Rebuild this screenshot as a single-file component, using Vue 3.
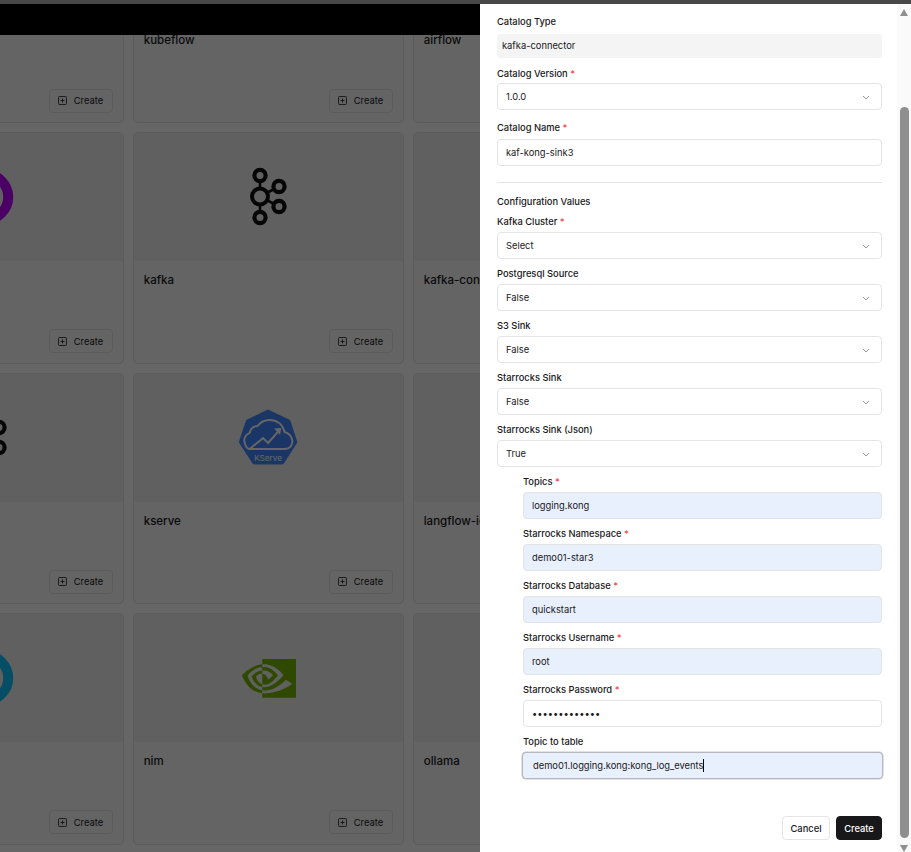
<template>
  <div class="app">
    <div class="strip"></div>
    <div class="page">
      <div class="backdrop">
        <div class="topbar"></div>
        <div class="grid">
          <div v-for="(card, i) in cards" :key="i" class="card">
            <div class="card-img">
              <svg v-if="card.logo === 'kafka'" class="logo-kafka" viewBox="0 0 40 60" fill="none" stroke="#111" stroke-width="4.2">
                <path d="M12 13V45M12 29.5L31 19.5M12 29.5L31 39.5" stroke-width="2.6" />
                <circle cx="12" cy="8.5" r="5.6" fill="#eef0ee" />
                <circle cx="12" cy="29.5" r="8" fill="#eef0ee" stroke-width="4" />
                <circle cx="12" cy="50.5" r="5.6" fill="#eef0ee" />
                <circle cx="31" cy="19.5" r="5.6" fill="#eef0ee" />
                <circle cx="31" cy="39.5" r="5.6" fill="#eef0ee" />
              </svg>
              <svg v-else-if="card.logo === 'kserve'" class="logo-kserve" viewBox="0 0 60 57">
                <path d="M29.3 0.5L50.5 10.5C51.2 10.8 51.7 11.4 51.9 12.1L58.5 32.2C58.7 32.9 58.6 33.6 58.2 34.2L45.5 54.2C45 55 44.2 55.5 43.3 55.5H16C15.1 55.5 14.3 55 13.8 54.2L0.8 34.2C0.4 33.6 0.3 32.9 0.5 32.2L7.2 12.1C7.4 11.4 7.9 10.8 8.6 10.5Z" fill="#4387ff" />
                <path d="M11 40H46C52 40 54.5 35 53.5 30.5C52.6 26.4 49.6 24 46 23C44 15 38 11 31 11C26 11 22 13 19 17C14.5 17 12 20 11 24C7 26 5 29.5 6 33.5C7 37.5 9 40 11 40L24.5 29L29.5 34L40 22" fill="none" stroke="#fff" stroke-width="1.9" />
                <path d="M35.5 19.5L42.5 19L41.5 26Z" fill="#fff" />
                <text x="29.5" y="51.5" text-anchor="middle" class="kserve-text">KServe</text>
              </svg>
              <svg v-else-if="card.logo === 'nim'" class="logo-nim" viewBox="0 4.06 24 15.94" preserveAspectRatio="none">
                <path fill="#76b900" d="M8.948 8.798v-1.43a6.7 6.7 0 0 1 .424-.018c3.922-.124 6.493 3.374 6.493 3.374s-2.774 3.851-5.75 3.851c-.398 0-.787-.062-1.158-.185v-4.346c1.528.185 1.837.857 2.747 2.385l2.04-1.714s-1.492-1.952-4-1.952a6.016 6.016 0 0 0-.796.035m0-4.735v2.138l.424-.027c5.45-.185 9.01 4.47 9.01 4.47s-4.08 4.964-8.33 4.964c-.37 0-.733-.035-1.095-.097v1.325c.3.035.61.062.91.062 3.957 0 6.82-2.023 9.593-4.408.459.371 2.34 1.263 2.73 1.652-2.633 2.208-8.772 3.984-12.253 3.984-.335 0-.653-.018-.971-.053v1.864H24V4.063zm0 10.326v1.131c-3.657-.654-4.673-4.46-4.673-4.46s1.758-1.944 4.673-2.262v1.237H8.94c-1.528-.186-2.73 1.245-2.73 1.245s.68 2.412 2.739 3.11M2.456 10.9s2.164-3.197 6.5-3.533V6.201C4.153 6.59 0 10.653 0 10.653s2.35 6.802 8.948 7.42v-1.237c-4.84-.6-6.492-5.936-6.492-5.936z" />
              </svg>
              <svg v-else-if="card.logo === 'ring'" class="logo-ring" viewBox="0 0 56 56" fill="none">
                <circle cx="25.5" cy="28" r="22.7" :stroke="card.color" stroke-width="10" />
              </svg>
            </div>
            <div class="card-name">{{ card.name }}</div>
            <!-- third column buttons are behind the drawer -->
            <div v-if="i % 3 !== 2" class="card-foot">
              <button class="create-btn">
                <svg class="plus-ico" viewBox="0 0 10 10" fill="none" stroke="#18181b" stroke-width="0.9">
                  <rect x="0.6" y="0.6" width="8.8" height="8.8" rx="1" />
                  <path d="M5 2.8V7.2M2.8 5H7.2" />
                </svg>
                Create
              </button>
            </div>
          </div>
        </div>
        <div class="overlay"></div>
      </div>

      <div class="drawer">
        <div class="form">
          <div class="field first">
            <div class="label">Catalog Type</div>
            <div class="ctl readonly">kafka-connector</div>
          </div>
          <div class="field tight">
            <div class="label">Catalog Version <span class="req">*</span></div>
            <div class="ctl select">1.0.0<svg class="chev" viewBox="0 0 8 5" fill="none"><path d="M1 1L4 4L7 1" /></svg></div>
          </div>
          <div class="field name">
            <div class="label">Catalog Name <span class="req">*</span></div>
            <div class="ctl">kaf-kong-sink3</div>
          </div>

          <div class="divider"></div>
          <div class="section">Configuration Values</div>

          <div v-for="s in selects" :key="s.label" class="field">
            <div class="label">{{ s.label }} <span v-if="s.req" class="req">*</span></div>
            <div class="ctl select">{{ s.value }}<svg class="chev" viewBox="0 0 8 5" fill="none"><path d="M1 1L4 4L7 1" /></svg></div>
          </div>

          <div class="nested">
            <div v-for="f in nested" :key="f.label" class="field">
              <div class="label">{{ f.label }} <span class="req">*</span></div>
              <div class="ctl" :class="{ filled: f.filled }">{{ f.value }}</div>
            </div>
            <div class="field">
              <div class="label">Topic to table</div>
              <div class="ctl filled focus">demo01.logging.kong:kong_log_events<span class="caret"></span></div>
            </div>
          </div>

          <div class="actions">
            <button class="btn">Cancel</button>
            <button class="btn primary">Create</button>
          </div>
        </div>

        <div class="scrollbar">
          <div class="arrow up"></div>
          <div class="thumb"></div>
          <div class="arrow down"></div>
        </div>
      </div>
    </div>
  </div>
</template>

<script setup>
// first column is only visible at its right edge, names are scrolled out of view
const cards = [
  { name: '' },
  { name: 'kubeflow' },
  { name: 'airflow' },
  { name: '', logo: 'ring', color: '#bc00ff' },
  { name: 'kafka', logo: 'kafka' },
  { name: 'kafka-connector' },
  { name: '', logo: 'kafka' },
  { name: 'kserve', logo: 'kserve' },
  { name: 'langflow-ide' },
  { name: '', logo: 'ring', color: '#10c0ff' },
  { name: 'nim', logo: 'nim' },
  { name: 'ollama' }
]

const selects = [
  { label: 'Kafka Cluster', value: 'Select', req: true },
  { label: 'Postgresql Source', value: 'False' },
  { label: 'S3 Sink', value: 'False' },
  { label: 'Starrocks Sink', value: 'False' },
  { label: 'Starrocks Sink (Json)', value: 'True' }
]

const nested = [
  { label: 'Topics', value: 'logging.kong', filled: true },
  { label: 'Starrocks Namespace', value: 'demo01-star3', filled: true },
  { label: 'Starrocks Database', value: 'quickstart', filled: true },
  { label: 'Starrocks Username', value: 'root', filled: true },
  { label: 'Starrocks Password', value: '•••••••••••••' }
]
</script>

<style>
html, body {
  margin: 0;
  overflow: hidden;
  background: #fff;
}
</style>

<style scoped>
.app {
  width: 911px;
  height: 852px;
  overflow: hidden;
  font-family: Inter, "Liberation Sans", sans-serif;
  color: #18181b;
}

.strip {
  height: 4px;
  background: #484848;
}

.page {
  display: flex;
  height: 848px;
}

.backdrop {
  position: relative;
  width: 480px;
  flex-shrink: 0;
  overflow: hidden;
}

.topbar {
  position: relative;
  z-index: 1;
  height: 31px;
  background: #000;
}

/* page is scrolled, so the first row sits under the bar */
.grid {
  display: grid;
  grid-template-columns: repeat(3, 271px);
  column-gap: 9px;
  row-gap: 9.3px;
  margin: -143px 0 0 -147.3px;
}

.card {
  height: 231.2px;
  box-sizing: border-box;
  border: 1px solid #e4e4e4;
  border-radius: 5px;
  background: #fafafa;
  display: flex;
  flex-direction: column;
  overflow: hidden;
}

.card-img {
  height: 128px;
  flex-shrink: 0;
  background: #eef0ee;
  display: flex;
  align-items: center;
  justify-content: center;
}

.logo-kafka {
  width: 40px;
  height: 60px;
}

.logo-kserve {
  width: 60px;
  height: 57px;
  transform: translateX(0.6px);
}

.logo-nim {
  width: 54.3px;
  height: 39px;
  transform: translateX(1px);
}

.logo-ring {
  width: 56px;
  height: 56px;
}

.kserve-text {
  font-family: Inter, "Liberation Sans", sans-serif;
  font-size: 8.2px;
  fill: #fff;
}

.card-name {
  height: 16px;
  padding: 11px 10px 0;
  font-size: 11.5px;
  font-weight: 500;
  line-height: 16px;
  white-space: nowrap;
}

.card-foot {
  margin-top: auto;
  padding: 0 10px 9.5px;
  display: flex;
  justify-content: flex-end;
}

.create-btn {
  width: 64px;
  height: 24px;
  padding: 0;
  border: 1px solid #e4e4e7;
  border-radius: 4px;
  background: #fafafa;
  color: #18181b;
  font-family: inherit;
  font-size: 9.33px;
  font-weight: 400;
  display: flex;
  align-items: center;
  justify-content: center;
  gap: 6.5px;
}

.plus-ico {
  width: 9px;
  height: 9px;
}

.overlay {
  position: absolute;
  inset: 0;
  z-index: 2;
  background: rgba(0, 0, 0, 0.6);
}

.drawer {
  flex: 1;
  min-width: 0;
  background: #fff;
  display: flex;
}

.form {
  flex: 1;
  box-sizing: border-box;
  padding: 9px 15px 0 17px;
  min-width: 0;
}

.field {
  margin-bottom: 6px;
}

.field.first {
  margin-bottom: 7px;
}

.field.first .label {
  margin-bottom: 5px;
}

.field.tight {
  margin-bottom: 9px;
}

.field.tight .label {
  margin-bottom: 2px;
}

.field.name .label {
  margin-bottom: 4px;
}

.label {
  height: 16px;
  margin-bottom: 3px;
  font-size: 9.33px;
  font-weight: 500;
  line-height: 18px;
  white-space: nowrap;
}

.req {
  color: #ef4444;
}

.ctl {
  position: relative;
  box-sizing: border-box;
  height: 27px;
  padding: 0 8px;
  border: 1px solid #e4e4e7;
  border-radius: 4px;
  background: #fff;
  font-size: 9.33px;
  line-height: 25px;
  white-space: nowrap;
}

.readonly {
  height: 24px;
  padding: 0 5px;
  border: 0;
  background: #f4f4f4;
  line-height: 24px;
}

.filled {
  background: #e8f0fe;
}

.focus {
  margin: 0 -1px;
  padding: 0 10px;
  border-color: #b4b7bb;
  box-shadow: 0 0 0 0.5px #c4c7cc;
}

.caret {
  display: inline-block;
  width: 1px;
  height: 13px;
  background: #000;
  vertical-align: -3px;
}

.chev {
  position: absolute;
  top: 11px;
  right: 11px;
  width: 8px;
  height: 5px;
}

.chev path {
  stroke: #8a8a8a;
  stroke-width: 0.9;
}

.divider {
  height: 1px;
  margin: 16px 0 10px;
  background: #e4e4e7;
}

.section {
  height: 16px;
  margin-bottom: 4px;
  font-size: 9.33px;
  font-weight: 500;
  line-height: 18px;
}

.nested {
  padding-left: 26px;
}

.actions {
  margin-top: 37px;
  display: flex;
  justify-content: flex-end;
  gap: 6px;
}

.btn {
  height: 24px;
  padding: 0;
  width: 48px;
  border: 1px solid #e4e4e7;
  border-radius: 4px;
  background: #fff;
  color: #18181b;
  font-family: inherit;
  font-size: 9.33px;
  font-weight: 500;
}

.btn.primary {
  width: 46px;
  background: #18181b;
  border-color: #18181b;
  color: #fff;
}

.scrollbar {
  width: 14px;
  flex-shrink: 0;
  background: #fafafa;
  display: flex;
  flex-direction: column;
  align-items: center;
}

.thumb {
  width: 9px;
  height: 731px;
  margin-top: 91px;
  border-radius: 5px;
  background: #8f8f8f;
}

.arrow {
  width: 0;
  height: 0;
  border-left: 4.5px solid transparent;
  border-right: 4.5px solid transparent;
}

.arrow.up {
  margin-top: 5px;
  border-bottom: 7px solid #8f8f8f;
}

.arrow.down {
  margin-top: 7px;
  border-top: 7px solid #8f8f8f;
}
</style>
